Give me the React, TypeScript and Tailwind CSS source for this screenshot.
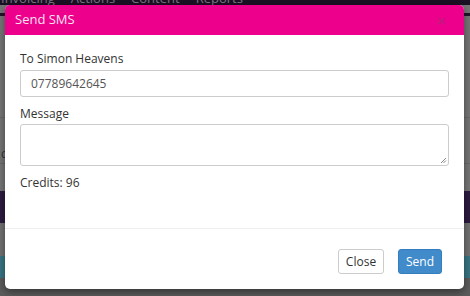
import React from "react";

const font = { fontFamily: '"Open Sans", "Liberation Sans", sans-serif' };

export default function App() {
  return (
    <div className="relative w-[470px] h-[296px] overflow-hidden bg-[#777777]" style={font}>
      {/* Page behind the dialog (dimmed) */}
      <div className="flex flex-col w-full h-full">
        <div className="h-[5px] bg-[#1b1124] overflow-hidden flex gap-[16px] pl-[1px] text-[13px] leading-[13px] text-[#7d7684]">
          <span className="-mt-[8px]">Invoicing</span>
          <span className="-mt-[8px]">Actions</span>
          <span className="-mt-[8px]">Content</span>
          <span className="-mt-[8px]">Reports</span>
        </div>
        <div className="h-[8px] bg-[#767676]" />
        <div className="h-[3px] bg-[#1e1428]" />
        <div className="h-[102px] bg-[#777777] border-b border-[#6a6a6a]" />
        <div className="h-[46px] bg-[#767676] border-b border-[#6a6a6a] flex items-center text-[12px] text-[#333] pl-[1px] pt-[26px]">
          c
        </div>
        <div className="h-[27px] bg-[#777777]" />
        <div className="h-[32px] bg-[#2d1b40]" />
        <div className="h-[33px] bg-[#727272]" />
        <div className="h-[22px] bg-[#3a7685]" />
        <div className="flex-1 bg-[#5c5c5c]" />
      </div>

      {/* Dialog */}
      <div className="absolute left-[5px] top-[5px] w-[459px] h-[284px] bg-white rounded-[5px] shadow-[0_3px_8px_rgba(0,0,0,0.45)] flex flex-col overflow-hidden">
        <div className="h-[30px] bg-[#ec008c] flex items-center justify-between pl-[10px] pr-[18px]">
          <span className="text-[13px] text-[#fde3f1]">Send SMS</span>
          <span className="text-[17px] leading-none text-[#b8207a]">×</span>
        </div>

        <div className="px-[15px] pt-[15px] pb-[37px] border-b border-[#eeeeee] text-[12px] text-[#333]">
          <div className="leading-[17px] mb-[3px]">To Simon Heavens</div>
          <div className="h-[27px] border border-[#cccccc] rounded-[3px] flex items-center px-[10px] text-[#555]">
            07789642645
          </div>
          <div className="leading-[17px] mt-[8px] mb-[2px]">Message</div>
          <div className="relative h-[42px] border border-[#cccccc] rounded-[3px]">
            <svg className="absolute right-[1px] bottom-[1px]" width="7" height="7" viewBox="0 0 7 7">
              <path d="M6 1L1 6M6 3.5L3.5 6" stroke="#888" strokeWidth="1" />
            </svg>
          </div>
          <div className="leading-[17px] mt-[8px]">Credits: 96</div>
        </div>

        <div className="flex justify-end gap-[14px] pt-[20px] pr-[22px]">
          <button className="h-[25px] w-[46px] border border-[#cccccc] rounded-[3px] bg-white text-[12px] text-[#333]">
            Close
          </button>
          <button className="h-[25px] w-[44px] border border-[#357ebd] rounded-[3px] bg-[#428bca] text-[12px] text-white">
            Send
          </button>
        </div>
      </div>
    </div>
  );
}
